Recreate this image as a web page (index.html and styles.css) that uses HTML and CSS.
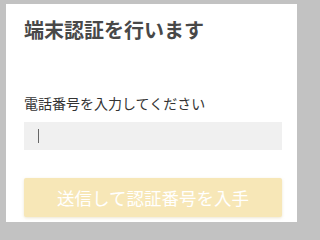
FILE: index.html
```html
<!DOCTYPE html>
<html lang="ja">
<head>
<meta charset="utf-8">
<link rel="stylesheet" href="styles.css">
</head>
<body>
<div class="card">
  <h1 class="title">端末認証を行います</h1>
  <label class="label">電話番号を入力してください</label>
  <div class="input"><span class="caret"></span></div>
  <button class="btn">送信して認証番号を入手</button>
</div>
</body>
</html>
```
FILE: styles.css
```css
html, body {
  margin: 0;
  padding: 0;
  background: #c2c2c2;
}
body {
  width: 302px;
  height: 230px;
  box-sizing: border-box;
  padding: 4px 5px 8px 6px;
  font-family: "Noto Sans CJK JP", "Noto Sans", sans-serif;
}
.card {
  background: #fff;
  height: 218px;
  box-sizing: border-box;
  padding: 13px 15px 0 18px;
  display: flex;
  flex-direction: column;
}
.title {
  margin: 0;
  font-size: 20px;
  line-height: 26px;
  font-weight: 700;
  color: #484848;
}
.label {
  margin-top: 50px;
  font-size: 14px;
  line-height: 20px;
  color: #333;
}
.input {
  margin-top: 9px;
  height: 28px;
  background: #f0f0f0;
  display: flex;
  align-items: center;
  padding-left: 14px;
}
.caret {
  width: 1px;
  height: 14px;
  background: #666;
}
.btn {
  margin-top: 28px;
  height: 39px;
  border: none;
  border-radius: 2px;
  background: #f7e7b7;
  color: #fff;
  font-family: inherit;
  font-size: 17.5px;
  padding: 0;
  box-shadow: 0 1px 3px rgba(200, 180, 120, 0.35);
}
```
